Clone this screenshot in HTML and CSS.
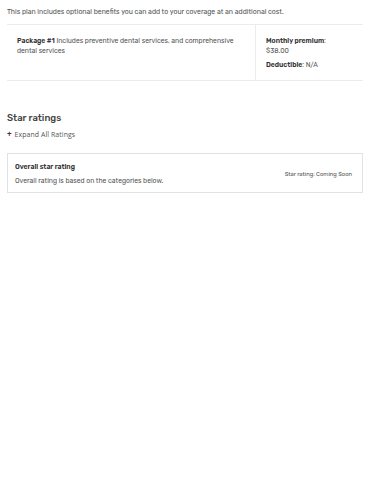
FILE: index.html
```html
<!DOCTYPE html>
<html>
<head>
<meta charset="utf-8">
<link rel="stylesheet" href="styles.css">
</head>
<body>
<div class="page">
  <p class="intro">This plan includes optional benefits you can add to your coverage at an additional cost.</p>
  <div class="pkg">
    <div class="pkg-desc"><b>Package #1</b> Includes preventive dental services, and comprehensive dental services</div>
    <div class="pkg-cost">
      <div><b>Monthly premium</b>:<br>$38.00</div>
      <div class="ded"><b>Deductible</b>: N/A</div>
    </div>
  </div>
  <h2 class="title">Star ratings</h2>
  <div class="expand"><span class="plus">+</span> Expand All Ratings</div>
  <div class="card">
    <div class="card-left">
      <div class="card-title">Overall star rating</div>
      <div class="card-sub">Overall rating is based on the categories below.</div>
    </div>
    <div class="card-right">Star rating: Coming Soon</div>
  </div>
</div>
</body>
</html>
```
FILE: styles.css
```css
* { box-sizing: border-box; }
body { margin: 0; background: #fff; font-family: "Rubik", "Inter", "Noto Sans", sans-serif; color: #555; }
.page { padding: 7px 7px; }
.intro { margin: 0; font-size: 6.9px; line-height: 10px; color: #555; }
.pkg { margin-top: 7px; display: flex; border-top: 1px solid #ececec; border-bottom: 1px solid #ececec; font-size: 6.8px; line-height: 10px; color: #555; }
.pkg-desc { flex: 1; padding: 11px 10px 14px 10px; border-right: 1px solid #ececec; }
.pkg-cost { width: 107px; padding: 11px 10px 10px 10px; }
.ded { margin-top: 4px; }
b { font-weight: 600; color: #333; }
.title { margin: 31px 0 0; font-size: 9.5px; font-weight: 500; color: #444; line-height: 12px; }
.expand { margin-top: 5px; font-family: "Open Sans", sans-serif; font-size: 6.9px; line-height: 10px; color: #555; letter-spacing: 0.1px; }
.plus { font-weight: 700; font-size: 8px; color: #333; margin-right: 1px; }
.card { margin-top: 13px; border: 1px solid #e2e2e2; display: flex; align-items: center; padding: 8px 10px 6px 7px; }
.card-left { flex: 1; }
.card-title { font-size: 6.8px; font-weight: 600; line-height: 10px; color: #333; }
.card-sub { margin-top: 4px; font-size: 6.8px; line-height: 10px; color: #555; }
.card-right { font-size: 5.8px; color: #555; }
```
